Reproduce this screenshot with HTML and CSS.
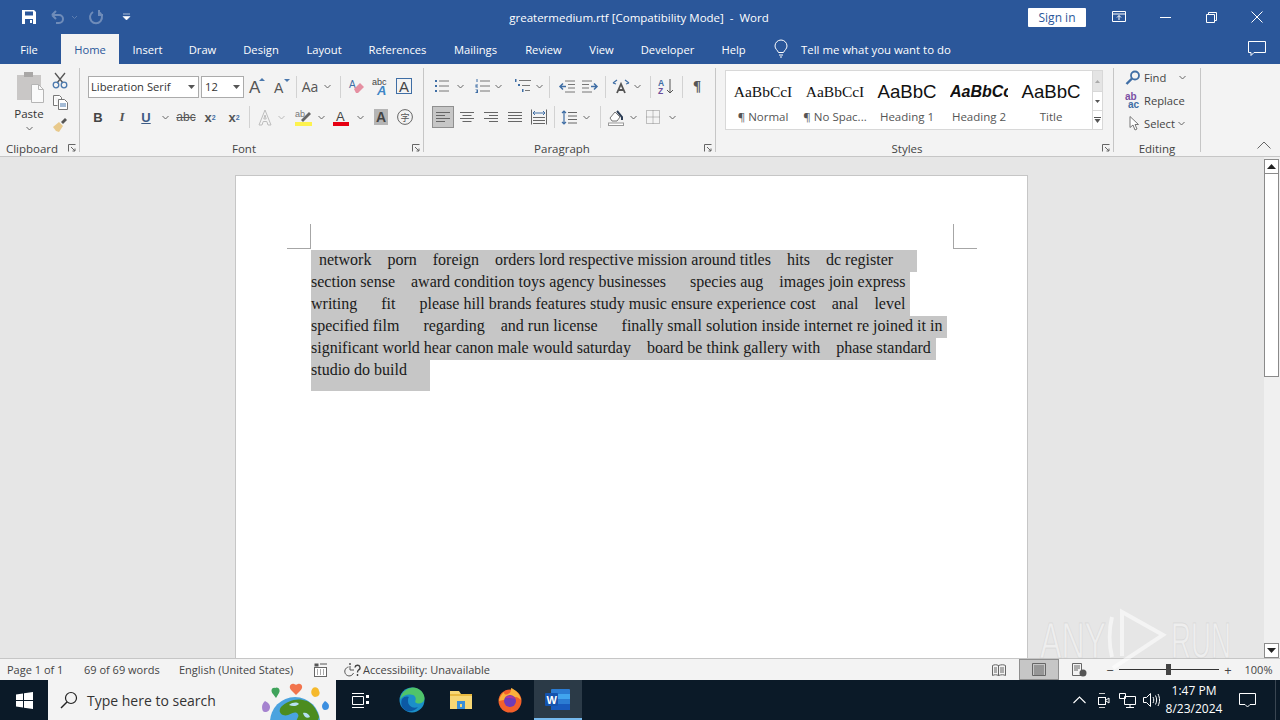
FILE: index.html
```html
<!DOCTYPE html>
<html lang="en">
<head>
<meta charset="utf-8">
<title>greatermedium.rtf - Word</title>
<link rel="stylesheet" href="styles.css">
</head>
<body>
<div class="app">
  <header class="titlebar">
    <div class="qat">
      <span class="q w32"><svg width="16" height="16" viewBox="0 0 16 16"><path d="M1 1h12l2 2v12H1z" fill="#fff"/><rect x="4" y="2.500" width="8" height="4" fill="#2b579a"/><rect x="4" y="10" width="8" height="5" fill="#2b579a"/><rect x="9" y="11" width="2" height="3" fill="#fff"/></svg></span>
      <span class="q qw24"><svg width="16" height="14" viewBox="0 0 16 14"><path d="M3 5h7a4 4 0 0 1 0 8H7M3 5l4-4M3 5l4 4" fill="none" stroke="#6f8cb9" stroke-width="2"/></svg></span>
      <span class="q qw10"><svg width="7" height="5" viewBox="0 0 7 5"><path d="M1 1l2.500 2.500L6 1" fill="none" stroke="#5d7eb0"/></svg></span>
      <span class="q qw34"><svg width="16" height="16" viewBox="0 0 16 16"><path d="M5 3a6 6 0 1 0 6 0M11 1v5h4" fill="none" stroke="#6f8cb9" stroke-width="2"/></svg></span>
      <span class="q qw26"><svg width="9" height="8" viewBox="0 0 9 8"><path d="M1 1h7M1 3.500h7L4.500 7z" fill="#fff" stroke="#fff" stroke-width=".6"/></svg></span>
    </div>
    <div class="doctitle">greatermedium.rtf [Compatibility Mode]&nbsp; -&nbsp; Word</div>
    <div class="winbtns">
      <span class="signin">Sign in</span>
      <span class="wb"><svg width="14" height="13" viewBox="0 0 14 13"><path d="M.5.500h13v10H.5zM.5 3h13M7 9V4.500M5 6.500l2-2 2 2" fill="none" stroke="#fff"/></svg></span>
      <span class="wb"><svg width="11" height="1" viewBox="0 0 11 1"><path d="M0 .5h11" stroke="#fff"/></svg></span>
      <span class="wb"><svg width="11" height="11" viewBox="0 0 11 11"><path d="M.5 2.500h8v8h-8zM2.500 2.500v-2h8v8h-2" fill="none" stroke="#fff"/></svg></span>
      <span class="wb"><svg width="12" height="12" viewBox="0 0 12 12"><path d="M.5.500l11 11M11.500.500l-11 11" stroke="#fff"/></svg></span>
    </div>
  </header>

  <nav class="tabs">
    <span class="tab tab-file">File</span>
    <span class="tab active">Home</span>
    <span class="tab">Insert</span>
    <span class="tab">Draw</span>
    <span class="tab">Design</span>
    <span class="tab">Layout</span>
    <span class="tab">References</span>
    <span class="tab">Mailings</span>
    <span class="tab">Review</span>
    <span class="tab">View</span>
    <span class="tab">Developer</span>
    <span class="tab">Help</span>
    <span class="tell"><svg width="14" height="18" viewBox="0 0 14 18"><path d="M4.500 12.500C3.500 10 1 9 1 6a6 6 0 0 1 12 0c0 3-2.500 4-3.500 6.500zM5 15h4M6 17h2" fill="none" stroke="#fff"/></svg><span>Tell me what you want to do</span></span>
    <span class="comment"><svg width="18" height="16" viewBox="0 0 18 16"><path d="M.5.500h17v11H6l-3 3v-3H.5z" fill="none" stroke="#fff"/></svg></span>
  </nav>

  <section class="ribbon">
    <div class="group g-clip">
      <div class="clipbody">
        <div class="paste">
          <svg class="pasteicon" width="30" height="32" viewBox="0 0 30 32"><rect x="2" y="3" width="24" height="25" fill="#c9c7c6"/><rect x="9" y="0" width="9" height="5" fill="#a9a7a6"/><path d="M16.500 12.500h7l5 5v13h-12z" fill="#fafafa" stroke="#b5b5b5"/><path d="M23.500 12.500v5h5" fill="none" stroke="#b5b5b5"/></svg>
          <span class="paste-l">Paste</span>
          <svg class="chev" width="7" height="5" viewBox="0 0 7 5"><path d="M.5 1l3 3 3-3" fill="none" stroke="#666"/></svg>
        </div>
        <div class="clipside">
          <span class="cs"><svg width="16" height="17" viewBox="0 0 16 17"><path d="M3 1l8 10M13 1L5 11" stroke="#555" stroke-width="1.300"/><circle cx="4" cy="13" r="2.800" fill="none" stroke="#4a78ad" stroke-width="1.300"/><circle cx="12" cy="13" r="2.800" fill="none" stroke="#4a78ad" stroke-width="1.300"/></svg></span>
          <span class="cs"><svg width="16" height="15" viewBox="0 0 16 15"><path d="M1.500.500h6l2 2v2M1.500.500v10h4" fill="#fff" stroke="#777"/><path d="M6.500 4.500h6l3 3v7h-9z" fill="#fff" stroke="#777"/><path d="M8 9h6M8 11h6" stroke="#4a78ad"/></svg></span>
          <span class="cs"><svg width="16" height="16" viewBox="0 0 16 16"><path d="M1 10l6-5 4 4-4 6-3-1z" fill="#e8c98b"/><path d="M9 5l4-4 2 2-4 4z" fill="#555"/></svg></span>
        </div>
      </div>
      <div class="glabel"><span class="gname">Clipboard</span><span class="launch"><svg width="8" height="8" viewBox="0 0 8 8"><path d="M.5 7.500v-7h7M3 3l4 4M7 4.500V7H4.500" fill="none" stroke="#666"/></svg></span></div>
    </div>

    <div class="group g-font">
      <div class="rows">
        <div class="row r-f1">
          <span class="combo c-font"><span class="ctext">Liberation Serif</span><svg width="7" height="4" viewBox="0 0 7 4"><path d="M0 0h7L3.500 4z" fill="#555"/></svg></span>
          <span class="combo c-size"><span class="ctext">12</span><svg width="7" height="4" viewBox="0 0 7 4"><path d="M0 0h7L3.500 4z" fill="#555"/></svg></span>
          <span class="b w24"><svg width="20" height="18" viewBox="0 0 20 18"><text x="1" y="16" class="ic-a a-l">A</text><path d="M11 4l3-3 3 3z" fill="#4a78ad"/></svg></span>
          <span class="b w24"><svg width="20" height="18" viewBox="0 0 20 18"><text x="2" y="16" class="ic-a a-m">A</text><path d="M12 2h6l-3 3z" fill="#4a78ad"/></svg></span>
          <span class="sep w4"></span>
          <span class="b w22 aa">Aa</span>
          <span class="b w14"><svg width="7" height="5" viewBox="0 0 7 5"><path d="M.5 1l3 3 3-3" fill="none" stroke="#666"/></svg></span>
          <span class="sep w12"></span>
          <span class="b w22"><svg width="16" height="16" viewBox="0 0 16 16"><text x="0" y="10" class="ic-a a-xs">A</text><path d="M5 11l6-6 4 4-6 6H7z" fill="#e58fa1"/></svg></span>
          <span class="b w24"><svg width="18" height="18" viewBox="0 0 18 18"><text x="1" y="8" class="ic-abc">abc</text><text x="6" y="18" class="ic-a a-blue">A</text></svg></span>
          <span class="b w24"><span class="boxa">A</span></span>
        </div>
        <div class="row r-f2">
          <span class="b w24 fb">B</span>
          <span class="b w24 fi">I</span>
          <span class="b w24 fu">U</span>
          <span class="b w14"><svg width="7" height="5" viewBox="0 0 7 5"><path d="M.5 1l3 3 3-3" fill="none" stroke="#666"/></svg></span>
          <span class="sp2"></span>
          <span class="b w24 fs">abc</span>
          <span class="b w24 fx">x<sub>2</sub></span>
          <span class="b w24 fx">x<sup>2</sup></span>
          <span class="sep w7"></span>
          <span class="b w24"><svg width="16" height="17" viewBox="0 0 16 17"><path d="M8 1l6 15h-3l-1.200-3.500H6.200L5 16H2z M8 6L6.800 10h2.400z" fill="#f4f4f4" stroke="#bdbdbd"/></svg></span>
          <span class="b w8"><svg width="7" height="5" viewBox="0 0 7 5"><path d="M.5 1l3 3 3-3" fill="none" stroke="#bbb"/></svg></span>
          <span class="b w6"></span>
          <span class="b w24"><svg width="19" height="17" viewBox="0 0 19 17"><text x="1" y="8" class="ic-abc g">ab</text><path d="M7 11l8-8 2 2-8 8z" fill="#666"/><rect x="1" y="13" width="17" height="4" fill="#fdf24e"/></svg></span>
          <span class="b w12"><svg width="7" height="5" viewBox="0 0 7 5"><path d="M.5 1l3 3 3-3" fill="none" stroke="#666"/></svg></span>
          <span class="b w28"><svg width="17" height="17" viewBox="0 0 17 17"><text x="3" y="12" class="ic-a a-dk">A</text><rect x="0" y="13" width="16" height="4" fill="#e60012"/></svg></span>
          <span class="b w10"><svg width="7" height="5" viewBox="0 0 7 5"><path d="M.5 1l3 3 3-3" fill="none" stroke="#666"/></svg></span>
          <span class="b w32"><span class="shada">A</span></span>
          <span class="b w16"><svg width="16" height="16" viewBox="0 0 16 16"><circle cx="8" cy="8" r="7.400" fill="none" stroke="#666"/><text x="3.500" y="12" class="ic-han">字</text></svg></span>
        </div>
      </div>
      <div class="glabel"><span class="gname">Font</span><span class="launch"><svg width="8" height="8" viewBox="0 0 8 8"><path d="M.5 7.500v-7h7M3 3l4 4M7 4.500V7H4.500" fill="none" stroke="#666"/></svg></span></div>
    </div>

    <div class="group g-para">
      <div class="rows">
        <div class="row r-p1">
          <span class="b w24"><svg width="16" height="14" viewBox="0 0 16 14"><path d="M5 2h10M5 7h10M5 12h10" stroke="#777"/><path d="M1 1h2v2H1zM1 6h2v2H1zM1 11h2v2H1z" fill="#3f6ea5"/></svg></span>
          <span class="b w12"><svg width="7" height="5" viewBox="0 0 7 5"><path d="M.5 1l3 3 3-3" fill="none" stroke="#666"/></svg></span>
          <span class="sp6"></span>
          <span class="b w20"><svg width="15" height="14" viewBox="0 0 15 14"><path d="M5 2h10M5 7h10M5 12h10" stroke="#777"/><path d="M1.500 0h1v3h-1zM.5 5.500h2.500v1H1.500v1H3v1H.5zM.5 10.500H3V14H.5v-1H2v-.5H1v-1h1V11H.5z" fill="#3f6ea5"/></svg></span>
          <span class="b w12"><svg width="7" height="5" viewBox="0 0 7 5"><path d="M.5 1l3 3 3-3" fill="none" stroke="#666"/></svg></span>
          <span class="sp6"></span>
          <span class="b w24"><svg width="17" height="14" viewBox="0 0 17 14"><path d="M5 1.500h12M8 6.500h8M11 11.500h5" stroke="#777"/><path d="M1 0h1.500v3H1zM4 5h2v2H4zM8 10h1.500v3H8z" fill="#3f6ea5"/></svg></span>
          <span class="b w10"><svg width="7" height="5" viewBox="0 0 7 5"><path d="M.5 1l3 3 3-3" fill="none" stroke="#666"/></svg></span>
          <span class="sep w10"></span>
          <span class="b w24"><svg width="17" height="13" viewBox="0 0 17 13"><path d="M7 1h10M10 4.500h7M10 8h7M7 12h10" stroke="#777"/><path d="M8 6.500H2M5 3.500l-3 3 3 3" fill="none" stroke="#3f6ea5" stroke-width="1.500"/></svg></span>
          <span class="b w24"><svg width="17" height="13" viewBox="0 0 17 13"><path d="M0 1h10M0 4.500h7M0 8h7M0 12h10" stroke="#777"/><path d="M9 6.500h6M12 3.500l3 3-3 3" fill="none" stroke="#3f6ea5" stroke-width="1.500"/></svg></span>
          <span class="sep w7"></span>
          <span class="b w24"><svg width="18" height="15" viewBox="0 0 18 15"><path d="M5 14l4-9 4 9M6.500 11h5" fill="none" stroke="#555" stroke-width="1.800"/><path d="M1 4l4-3M1 4l3 1M17 4l-4-3M17 4l-3 1" fill="none" stroke="#3f6ea5" stroke-width="1.200"/></svg></span>
          <span class="b w8"><svg width="7" height="5" viewBox="0 0 7 5"><path d="M.5 1l3 3 3-3" fill="none" stroke="#666"/></svg></span>
          <span class="sep w18"></span>
          <span class="b w14"><svg width="16" height="17" viewBox="0 0 16 17"><text x="0" y="8" class="ic-az">A</text><text x="0" y="16" class="ic-az z">Z</text><path d="M12 1v14M9 12l3 3 3-3" fill="none" stroke="#555"/></svg></span>
          <span class="sep w18"></span>
          <span class="b w12 pil">¶</span>
        </div>
        <div class="row r-p2">
          <span class="b w22 on"><svg width="14" height="11" viewBox="0 0 14 11"><path d="M0 .5h14M0 3.500h9M0 6.500h14M0 9.500h9" stroke="#666"/></svg></span>
          <span class="sp1"></span>
          <span class="b w24"><svg width="14" height="11" viewBox="0 0 14 11"><path d="M0 .5h14M2.500 3.500h9M0 6.500h14M2.500 9.500h9" stroke="#666"/></svg></span>
          <span class="b w24"><svg width="14" height="11" viewBox="0 0 14 11"><path d="M0 .5h14M5 3.500h9M0 6.500h14M5 9.500h9" stroke="#666"/></svg></span>
          <span class="b w24"><svg width="14" height="11" viewBox="0 0 14 11"><path d="M0 .5h14M0 3.500h14M0 6.500h14M0 9.500h14" stroke="#666"/></svg></span>
          <span class="b w24"><svg width="16" height="16" viewBox="0 0 16 16"><path d="M.5.500v15M15.500.500v15M2 14.500h12M2 11.500h12M2 8.500h12" stroke="#666"/><path d="M2 4h12M4 2L2 4l2 2M12 2l2 2-2 2" fill="none" stroke="#3f6ea5"/></svg></span>
          <span class="sep w6"></span>
          <span class="b w24"><svg width="16" height="15" viewBox="0 0 16 15"><path d="M7 2.500h9M7 6h9M7 9.500h9M7 13h9" stroke="#666"/><path d="M3 1v13M1 3l2-2 2 2M1 12l2 2 2-2" fill="none" stroke="#3f6ea5" stroke-width="1.200"/></svg></span>
          <span class="b w10"><svg width="7" height="5" viewBox="0 0 7 5"><path d="M.5 1l3 3 3-3" fill="none" stroke="#666"/></svg></span>
          <span class="sep w18"></span>
          <span class="b w14"><svg width="17" height="17" viewBox="0 0 17 17"><path d="M2 9l5-6 5 5-3 4H4z" fill="#fff" stroke="#777"/><path d="M9 2l5 6v3" fill="none" stroke="#2d3e55" stroke-width="2"/><rect x=".5" y="14" width="15" height="2.500" fill="#fff" stroke="#999"/></svg></span>
          <span class="sp4"></span>
          <span class="b w12"><svg width="7" height="5" viewBox="0 0 7 5"><path d="M.5 1l3 3 3-3" fill="none" stroke="#666"/></svg></span>
          <span class="b w28"><svg width="14" height="14" viewBox="0 0 14 14"><path d="M.5.500h13v13H.5zM7 .5v13M.5 7h13" fill="none" stroke="#888" stroke-dasharray="1 1"/></svg></span>
          <span class="b w10"><svg width="7" height="5" viewBox="0 0 7 5"><path d="M.5 1l3 3 3-3" fill="none" stroke="#666"/></svg></span>
        </div>
      </div>
      <div class="glabel"><span class="gname">Paragraph</span><span class="launch"><svg width="8" height="8" viewBox="0 0 8 8"><path d="M.5 7.500v-7h7M3 3l4 4M7 4.500V7H4.500" fill="none" stroke="#666"/></svg></span></div>
    </div>

    <div class="group g-styles">
      <div class="gallery">
        <div class="style"><span class="sample s-normal">AaBbCcI</span><span class="cap">¶ Normal</span></div>
        <div class="style"><span class="sample s-normal">AaBbCcI</span><span class="cap">¶ No Spac...</span></div>
        <div class="style"><span class="sample s-h1">AaBbC</span><span class="cap">Heading 1</span></div>
        <div class="style"><span class="sample s-h2">AaBbCc</span><span class="cap">Heading 2</span></div>
        <div class="style"><span class="sample s-h1">AaBbC</span><span class="cap">Title</span></div>
        <div class="gscroll">
          <span class="gs gs-up"><svg width="5" height="3" viewBox="0 0 5 3"><path d="M0 3h5L2.500 0z" fill="#aaa"/></svg></span>
          <span class="gs"><svg width="5" height="3" viewBox="0 0 5 3"><path d="M0 0h5L2.500 3z" fill="#555"/></svg></span>
          <span class="gs"><svg width="7" height="6" viewBox="0 0 7 6"><path d="M0 .5h7" stroke="#555"/><path d="M.5 2h6L3.500 6z" fill="#555"/></svg></span>
        </div>
      </div>
      <div class="glabel"><span class="gname">Styles</span><span class="launch"><svg width="8" height="8" viewBox="0 0 8 8"><path d="M.5 7.500v-7h7M3 3l4 4M7 4.500V7H4.500" fill="none" stroke="#666"/></svg></span></div>
    </div>

    <div class="group g-edit">
      <div class="editrows">
        <div class="er"><svg width="15" height="15" viewBox="0 0 15 15"><circle cx="9.500" cy="5.500" r="4" fill="none" stroke="#3f6ea5" stroke-width="1.800"/><path d="M6.500 8.500L1 14" stroke="#3f6ea5" stroke-width="2.400"/></svg><span class="et">Find</span><svg class="ec1" width="7" height="5" viewBox="0 0 7 5"><path d="M.5 1l3 3 3-3" fill="none" stroke="#666"/></svg></div>
        <div class="er"><svg width="16" height="15" viewBox="0 0 16 15"><text x="0" y="7" class="ic-rep p">ab</text><text x="3" y="15" class="ic-rep bl">ac</text></svg><span class="et">Replace</span></div>
        <div class="er"><svg width="13" height="16" viewBox="0 0 13 16"><path d="M3.500.500v11l3-2.500 2 5 2-1-2-4.500h3.500z" fill="#fff" stroke="#777"/></svg><span class="et">Select</span><svg class="ec2" width="7" height="5" viewBox="0 0 7 5"><path d="M.5 1l3 3 3-3" fill="none" stroke="#666"/></svg></div>
      </div>
      <div class="glabel"><span class="gname">Editing</span></div>
    </div>

    <div class="collapse"><svg width="14" height="8" viewBox="0 0 14 8"><path d="M.5 7.500L7 1l6.500 6.500" fill="none" stroke="#666"/></svg></div>
  </section>

  <main class="workspace">
    <div class="canvas">
      <article class="page">
        <span class="crop crop-l"></span>
        <span class="crop crop-r"></span>
        <p class="ln l1">  network    porn    foreign    orders lord respective mission around titles    hits    dc register</p>
        <p class="ln l2">section sense    award condition toys agency businesses      species aug    images join express</p>
        <p class="ln l3">writing      fit      please hill brands features study music ensure experience cost    anal    level</p>
        <p class="ln l4">specified film      regarding    and run license      finally small solution inside internet re joined it in</p>
        <p class="ln l5">significant world hear canon male would saturday    board be think gallery with    phase standard</p>
        <p class="ln l6">studio do build</p>
      </article>
    </div>
    <aside class="vscroll">
      <span class="sb-btn"><svg width="9" height="5" viewBox="0 0 9 5"><path d="M0 5h9L4.500 0z" fill="#222"/></svg></span>
      <span class="sb-thumb"></span>
      <span class="sb-fill"></span>
      <span class="sb-btn"><svg width="9" height="5" viewBox="0 0 9 5"><path d="M0 0h9L4.500 5z" fill="#222"/></svg></span>
    </aside>
  </main>

  <footer class="status">
    <span class="st st-page">Page 1 of 1</span>
    <span class="st st-words">69 of 69 words</span>
    <span class="st st-lang">English (United States)</span>
    <span class="st st-ico"><svg width="13" height="14" viewBox="0 0 13 14"><path d="M.5.500h4v3h-4z" fill="#555"/><path d="M6 1h7" stroke="#555"/><rect x=".5" y="4.500" width="12" height="9" fill="#fff" stroke="#666"/><path d="M3 7h1M6 7h1M9 7h1M3 9h1M6 9h1M9 9h1M3 11h1M6 11h1M9 11h1" stroke="#555"/></svg></span>
    <span class="st st-acc"><svg width="17" height="15" viewBox="0 0 17 15"><circle cx="5" cy="2" r="1" fill="#555"/><path d="M3.500 5a4.500 4.500 0 1 0 5 6M5 4v4h4" fill="none" stroke="#555"/><path d="M10 5.500a2.500 2.500 0 1 1 3.500 2.500c-.800.500-1 1-1 2.500M12.500 12v2" fill="none" stroke="#444" stroke-width="1.400"/></svg><span>Accessibility: Unavailable</span></span>
    <div class="st-right">
      <span class="vw"><svg width="14" height="12" viewBox="0 0 14 12"><path d="M.5 1.500c2-1 4-1 6 0v10c-2-1-4-1-6 0zM13.500 1.500c-2-1-4-1-7 0v10c3-1 5-1 7 0zM2 4h3M2 6h3M2 8h3M8 4h4M8 6h4M8 8h4" fill="none" stroke="#666"/></svg></span>
      <span class="vw on"><svg width="14" height="13" viewBox="0 0 14 13"><path d="M.5.500h13v12H.5zM2 3h10M2 5h10M2 7h10M2 9h10M2 11h10" fill="none" stroke="#666"/></svg></span>
      <span class="vw"><svg width="15" height="14" viewBox="0 0 15 14"><path d="M.5.500h9v12H.5zM2 3h6M2 5h6M2 7h4" fill="none" stroke="#666"/><circle cx="11" cy="10" r="3.500" fill="#555"/></svg></span>
      <span class="zm">−</span>
      <span class="slider"><span class="knob"></span></span>
      <span class="zp">+</span>
      <span class="zv">100%</span>
    </div>
  </footer>

  <footer class="taskbar">
    <span class="start"><svg width="17" height="17" viewBox="0 0 17 17"><path d="M0 2.400L7 1.400V8H0zM8 1.300L17 0v8H8zM0 9h7v6.600l-7-1zM8 9h9v8l-9-1.300z" fill="#fff"/></svg></span>
    <div class="search">
      <svg width="18" height="18" viewBox="0 0 18 18"><circle cx="11" cy="7" r="5.500" fill="none" stroke="#222" stroke-width="1.200"/><path d="M7 11l-6 6" stroke="#222" stroke-width="1.400"/></svg>
      <span class="stext">Type here to search</span>
      <svg class="globe" width="74" height="40" viewBox="0 0 74 40">
        <circle cx="37" cy="42" r="25" fill="#4aa3df"/>
        <path d="M23 27c6-6 16-10 26-6 6 3 10 9 12 16l-2 6H39c-2-5 4-6 0-10-5-2-8 4-14 2-4-2-4-5-2-8z" fill="#4c8c1f"/>
        <path d="M31 25c4-3 8-3 10-1-2 2-6 3-10 1zM45 33c3-1 6 1 7 4-3 2-6 0-7-4z" fill="#b7e0f2"/>
        <path d="M34 11c-4-3-2-8 2-7 1 0 2 1 2 1s1-1 2-1c4-1 6 4 2 7l-4 4z" fill="#f2744d"/>
        <path d="M15 14c-3-3-1-7 2-6 3-2 6 2 4 5l-3 5z" fill="#3fa35b"/>
        <path d="M55 8c2-2 6 0 6 3 2 3-1 6-4 6-4-1-5-6-2-9z" fill="#f5b92c"/>
        <path d="M4 27c0-3 2-5 3-6 2 1 5 3 5 6 0 3-2 5-5 5-2 0-3-2-3-5z" fill="#a583cf"/>
        <path d="M64 26c0-2 2-4 3-5 2 1 4 3 4 5 0 3-2 4-4 4s-3-2-3-4z" fill="#3c8fe0"/>
      </svg>
    </div>
    <span class="tb tb-task"><svg width="17" height="17" viewBox="0 0 17 17"><path d="M.5 4.500h11v8H.5zM0 1.500h12M0 15.500h12" fill="none" stroke="#fff"/><path d="M14 3h3v3h-3zM14 9h3v3h-3z" fill="#fff"/></svg></span>
    <span class="tb"><svg width="26" height="26" viewBox="0 0 26 26"><circle cx="13" cy="13" r="12.500" fill="#1b8fc9"/><path d="M1 13C2 4 10 .5 14 .5c7 0 11.500 6 11.500 10.500 0 4-3 5.500-6 5.500-2 0-4-1-3-3 1-3-1-6-5-6-5 0-9 2-10.500 5.500z" fill="#4fc46a"/><path d="M9 14c0 5 5 8 10 6-3 4-8 5-11 4C3 22 1 17 3 12c2-3 6-3 7-2-1 1-1 2-1 4z" fill="#0c59a4"/></svg></span>
    <span class="tb"><svg width="24" height="20" viewBox="0 0 24 20"><path d="M1 1h9l2 3h11v15H1z" fill="#f7d774"/><rect x="1" y="4" width="22" height="2" fill="#e8b93f"/><rect x="8" y="11" width="8" height="8" fill="#3a8fd8"/><rect x="11" y="14" width="2" height="3" fill="#f7d774"/></svg></span>
    <span class="tb"><svg width="26" height="26" viewBox="0 0 26 26"><circle cx="13" cy="14" r="11.500" fill="#f3602a"/><path d="M2 14c1-5 3-7 5-9 0 3 2 3 4 2 3-1 3-4 3-6 5 2 9 6 10 12-2-2-4-3-5-3z" fill="#fbb03b"/><circle cx="13" cy="14" r="6" fill="#6f3bb8"/><path d="M8 11c3-3 8-3 10 1-3-1-6-1-10-1z" fill="#b0359b"/></svg></span>
    <span class="tb tb-word"><svg width="26" height="21" viewBox="0 0 26 21"><rect x="6" y="0" width="19" height="21" rx="1" fill="#2b7cd3"/><rect x="6" y="5" width="19" height="5" fill="#41a5ee"/><rect x="6" y="15" width="19" height="6" fill="#185abd"/><rect x="0" y="4" width="13" height="13" rx="1" fill="#1453ae"/><text x="1.500" y="14.500" class="ic-w">W</text></svg></span>
    <div class="tray">
      <span class="tr"><svg width="13" height="8" viewBox="0 0 13 8"><path d="M.5 7l6-6 6 6" fill="none" stroke="#fff" stroke-width="1.100"/></svg></span>
      <span class="tr"><svg width="13" height="19" viewBox="0 0 13 19"><path d="M2 2.500h6M2 16.500h6" stroke="#ccc"/><rect x="1.500" y="6.500" width="7" height="7" fill="none" stroke="#fff"/><path d="M9 9l3-2v5l-3-2" fill="none" stroke="#fff"/></svg></span>
      <span class="tr"><svg width="17" height="15" viewBox="0 0 17 15"><path d="M5.500 3.500h11v8h-11zM.5.500h6v5h-6zM11 11.500v3M7 14.500h8" fill="#0b1a28" stroke="#fff"/></svg></span>
      <span class="tr"><svg width="17" height="14" viewBox="0 0 17 14"><path d="M.5 4.500h3l4-4v13l-4-4h-3z" fill="none" stroke="#fff"/><path d="M10 4c1 2 1 4 0 6M12.500 2.500c1.500 3 1.500 6 0 9M15 1c2 4 2 8 0 12" fill="none" stroke="#fff"/></svg></span>
      <span class="clock"><span>1:47 PM</span><span>8/23/2024</span></span>
      <span class="note"><svg width="17" height="15" viewBox="0 0 17 15"><path d="M.5.500h16v11H11l-2.500 2.500L6 11.500H.5z" fill="none" stroke="#fff"/></svg></span>
      <span class="edge"></span>
    </div>
  </footer>

  <svg class="wm" width="210" height="84" viewBox="0 0 210 84" aria-label="ANY RUN watermark">
    <text x="4" y="52" textLength="66" lengthAdjust="spacingAndGlyphs" class="wmt">ANY</text>
    <text x="135" y="52" textLength="60" lengthAdjust="spacingAndGlyphs" class="wmt">RUN</text>
    <path d="M77 62L127 29L86 6V50M76 11c-3 12-3 28 0 40" class="wmp"/>
  </svg>
</div>
</body>
</html>
```

FILE: styles.css
```css
* { box-sizing: border-box; }
html, body { margin: 0; padding: 0; }
body { width: 1280px; height: 720px; overflow: hidden; font-family: "Open Sans", "Liberation Sans", sans-serif; font-size: 11.5px; color: #444; }
svg { display: block; flex: none; overflow: visible; }
.app { position: relative; display: flex; flex-direction: column; width: 1280px; height: 720px; background: #e6e6e6; overflow: hidden; }

/* title bar */
.titlebar { display: flex; align-items: center; height: 34px; background: #2b579a; color: #fff; flex: none; }
.qat { display: flex; align-items: center; width: 504px; padding-left: 13px; }
.q { display: flex; justify-content: center; align-items: center; height: 34px; }
.w32 { width: 32px; } .qw24 { width: 24px; } .qw10 { width: 10px; } .qw34 { width: 34px; } .qw26 { width: 26px; }
.doctitle { width: 270px; font-size: 11.5px; text-align: center; color: #fff; }
.winbtns { display: flex; align-items: center; margin-left: auto; height: 34px; }
.signin { display: flex; align-items: center; justify-content: center; width: 58px; height: 19px; margin-right: 10px; background: #fff; color: #2b579a; font-size: 12px; border-radius: 1px; }
.wb { display: flex; align-items: center; justify-content: center; width: 46px; height: 30px; }

/* tabs */
.tabs { display: grid; grid-template-columns: 61px 58px 57px 53px 64px 62px 85px 71px 65px 51px 81px 51px auto 1fr; height: 30px; background: #2b579a; flex: none; }
.tab { display: flex; align-items: center; justify-content: center; color: #fff; font-size: 11.2px; }
.tab-file { padding-right: 3px; }
.tab.active { background: #f3f3f3; color: #2b579a; }
.tell { display: flex; align-items: center; gap: 13px; margin-left: 15px; color: #fff; font-size: 11.4px; }
.comment { display: flex; justify-content: flex-end; align-items: center; padding-right: 14px; }

/* ribbon */
.ribbon { display: flex; height: 93px; background: #f3f3f3; border-bottom: 1px solid #c6c6c6; flex: none; padding-top: 4px; }
.group { display: flex; flex-direction: column; height: 84px; border-right: 1px solid #c6c6c6; flex: none; }
.g-clip { width: 80px; } .g-font { width: 344px; } .g-para { width: 292px; } .g-styles { width: 398px; } .g-edit { width: 87px; }
.rows { display: flex; flex-direction: column; gap: 8px; padding-top: 8px; height: 68px; flex: none; }
.row { display: flex; align-items: center; height: 22px; }
.r-f1 { padding-left: 8px; }
.r-f2 { padding-left: 6px; }
.r-p1 { padding-left: 6px; }
.r-p2 { padding-left: 8px; }
.r-f1 .b, .r-p1 .b { margin-top: -2px; }
.glabel { display: flex; align-items: center; height: 16px; margin-top: 4px; flex: none; }
.gname { flex: 1; text-align: center; font-size: 11.5px; color: #444; }
.launch { display: flex; align-items: center; justify-content: center; width: 15px; height: 16px; }
.b { display: flex; align-items: center; justify-content: center; height: 22px; flex: none; color: #555; }
.w4 { width: 4px; } .w6 { width: 6px; } .w7 { width: 7px; } .w8 { width: 8px; } .w10 { width: 10px; } .w14 { width: 14px; } .w16 { width: 16px; } .w18 { width: 18px; } .w20 { width: 20px; } .w22 { width: 22px; } .w24 { width: 24px; } .w12 { width: 12px; } .w28 { width: 28px; }
.sep { display: flex; justify-content: center; height: 22px; flex: none; }
.sep::before { content: ""; width: 1px; height: 100%; background: #d2d2d2; }
.sp1 { width: 1px; flex: none; } .sp2 { width: 2px; flex: none; } .sp4 { width: 4px; flex: none; } .sp6 { width: 6px; flex: none; }
.combo { display: flex; align-items: center; justify-content: space-between; height: 22px; background: #fff; border: 1px solid #ababab; padding: 0 3px 1px 2px; flex: none; font-size: 11.2px; color: #333; }
.c-font { width: 111px; margin-right: 2px; }
.c-size { width: 43px; margin-right: 2px; }
.c-size .ctext { padding-left: 1px; }
.aa { font-size: 14px; color: #555; padding-left: 2px; }
.boxa { display: flex; align-items: center; justify-content: center; width: 16px; height: 16px; border: 1.500px solid #3f6ea5; font-family: "Liberation Sans", sans-serif; font-size: 15px; color: #444; }
.fb { font: bold 13px "Liberation Sans", sans-serif; color: #444; }
.fi { font: italic bold 13px "Liberation Serif", serif; color: #555; }
.fu { font: bold 13px "Liberation Sans", sans-serif; text-decoration: underline; color: #3d5b85; }
.fs { font: 12px "Liberation Sans", sans-serif; text-decoration: line-through; color: #555; }
.fx { font: bold 13px "Liberation Sans", sans-serif; color: #555; }
.fx sub, .fx sup { font-size: 7px; color: #3f6ea5; }
.shada { display: flex; align-items: center; justify-content: center; width: 14px; height: 16px; background: #b5b5b5; font: bold 14px "Liberation Sans", sans-serif; color: #444; }
.pil { font: bold 15px "Liberation Serif", serif; color: #555; }
.on { background: #c6c6c6; border: 1px solid #8f8f8f; }
.ic-a { font-family: "Liberation Sans", sans-serif; fill: #555; }
.a-l { font-size: 17px; } .a-m { font-size: 14px; } .a-xs { font-size: 10px; fill: #3f6ea5; }
.a-blue { font-size: 13px; font-weight: bold; font-style: italic; fill: #3f86c6; }
.a-dk { font-size: 13px; fill: #444; }
.ic-abc { font: 9px "Liberation Sans", sans-serif; fill: #444; }
.ic-abc.g { fill: #777; }
.ic-han { font: 9px "Noto Sans CJK SC", sans-serif; fill: #555; }
.ic-az { font: bold 8.500px "Liberation Sans", sans-serif; fill: #3f6ea5; }
.ic-az.z { fill: #6b4f9b; }

/* clipboard */
.clipbody { display: flex; height: 68px; padding: 4px 0 0 13px; flex: none; }
.paste { display: flex; flex-direction: column; align-items: center; width: 32px; }
.pasteicon { margin-left: 2px; }
.paste-l { margin-top: 2px; font-size: 11.500px; color: #333; line-height: 16px; }
.chev { margin-top: 4px; }
.clipside { display: flex; flex-direction: column; align-items: center; width: 30px; margin-top: -3px; }
.cs { display: flex; align-items: center; justify-content: center; height: 23px; width: 30px; }

/* styles gallery */
.g-styles { padding-left: 9px; }
.gallery { display: grid; grid-template-columns: repeat(5, 72px) 1fr; width: 378px; height: 60px; margin-top: 2px; margin-bottom: 6px; padding-left: 1px; background: #fff; border: 1px solid #d8d8d8; flex: none; }
.style { display: flex; flex-direction: column; align-items: center; overflow: hidden; padding-top: 7px; }
.sample { height: 28px; line-height: 28px; white-space: nowrap; color: #111; width: 60px; overflow: hidden; text-align: center; display: flex; justify-content: center; }
.s-normal { font: 15.500px/28px "Liberation Serif", serif; }
.s-h1 { font: 18.670px/28px "Liberation Sans", sans-serif; }
.s-h2 { font: italic bold 16px/28px "Liberation Sans", sans-serif; justify-content: flex-start; width: 58px; }
.cap { font-size: 11.500px; color: #555; line-height: 16px; margin-top: 3px; white-space: nowrap; }
.gscroll { display: grid; grid-template-rows: 21px 19px 18px; border-left: 1px solid #d8d8d8; margin-left: 5px; }
.gs { display: flex; align-items: center; justify-content: center; border-bottom: 1px solid #d8d8d8; }
.gs-up { background: #e4e4e4; }
.gs:last-child { border-bottom: 0; }
.g-styles .glabel { margin-left: -9px; margin-top: 4px; }

/* editing */
.editrows { display: flex; flex-direction: column; height: 70px; margin-top: -2px; padding: 0 0 0 11px; flex: none; }
.er { display: flex; align-items: center; height: 23px; gap: 3px; font-size: 11.200px; color: #444; }
.er svg:first-child { width: 16px; }
.et { white-space: nowrap; }
.ec1 { margin-left: 10px; } .ec2 { margin-left: 0; }
.ic-rep { font: bold 10px "Liberation Sans", sans-serif; }
.ic-rep.p { fill: #7b4fa3; } .ic-rep.bl { fill: #3f6ea5; }
.collapse { display: flex; align-items: flex-end; justify-content: flex-end; flex: 1; height: 84px; padding: 0 9px 3px 0; }

/* workspace */
.workspace { display: flex; height: 501px; flex: none; overflow: hidden; }
.canvas { flex: 1; padding: 18px 0 0 235px; overflow: hidden; }
.page { position: relative; width: 793px; height: 500px; background: #fff; border: 1px solid #c6c6c6; padding: 74px 0 0 75px; }
.crop { position: absolute; top: 48px; width: 24px; height: 25px; border-bottom: 1px solid #a6a6a6; }
.crop-l { left: 51px; border-right: 1px solid #a6a6a6; }
.crop-r { left: 717px; border-left: 1px solid #a6a6a6; }
.ln { margin: 0; height: 22px; background: #c6c6c6; font: 16px/20px "Liberation Serif", serif; white-space: pre; color: #1a1a1a; }
.l1 { width: 606px; } .l2 { width: 599px; } .l3 { width: 599px; } .l4 { width: 636px; } .l5 { width: 625px; } .l6 { width: 119px; height: 31px; }
.vscroll { display: flex; flex-direction: column; width: 16px; padding-top: 2px; background: #f0f0f0; flex: none; }
.sb-btn { display: flex; align-items: center; justify-content: center; width: 15px; height: 15px; background: #fff; border: 1px solid #8a8a8a; flex: none; }
.sb-thumb { width: 15px; height: 203px; background: #fff; border: 1px solid #8a8a8a; border-top-width: 0; flex: none; }
.sb-fill { flex: 1; }

/* status bar */
.status { display: flex; align-items: center; height: 22px; background: #f3f3f3; border-top: 1px solid #c6c6c6; flex: none; font-size: 11px; color: #444; }
.st { white-space: nowrap; }
.st-page { width: 84px; padding-left: 7px; }
.st-words { width: 95px; }
.st-lang { width: 134px; }
.st-ico { width: 32px; padding-left: 1px; }
.st-acc { display: flex; align-items: center; gap: 1px; }
.st-right { display: flex; align-items: center; margin-left: auto; height: 21px; }
.vw { display: flex; align-items: center; justify-content: center; width: 40px; height: 21px; }
.vw.on { background: #c6c6c6; }
.zm, .zp { display: flex; justify-content: center; width: 12px; font-size: 13px; color: #444; }
.zm { margin-left: 5px; }
.slider { position: relative; width: 100px; height: 1px; margin: 0 3px; background: #333; }
.knob { position: absolute; left: 47px; top: -5px; width: 5px; height: 11px; background: #444; }
.zv { width: 46px; text-align: center; font-size: 11px; padding-left: 3px; }

/* task bar */
.taskbar { display: flex; align-items: center; height: 40px; background: #0b1a28; flex: none; color: #fff; }
.start { display: flex; align-items: center; justify-content: center; width: 48px; height: 40px; }
.search { display: flex; align-items: center; width: 288px; height: 40px; padding-left: 12px; background: #f3f3f3; color: #333; overflow: hidden; }
.stext { margin-left: 9px; font-size: 14px; white-space: nowrap; color: #333; }
.globe { margin-left: auto; margin-right: 4px; }
.tb { display: flex; align-items: center; justify-content: center; width: 49px; height: 40px; flex: none; }
.tb-task { width: 51px; padding-right: 2px; }
.tb-word { width: 48px; background: #2b3a47; border-bottom: 2px solid #76b9ed; }
.ic-w { font: bold 11px "Liberation Sans", sans-serif; fill: #fff; }
.tray { display: flex; align-items: center; margin-left: auto; height: 40px; }
.tr { display: flex; align-items: center; justify-content: center; width: 24px; height: 40px; }
.clock { display: flex; flex-direction: column; align-items: center; width: 62px; font-size: 12px; line-height: 18px; color: #fff; }
.note { display: flex; align-items: center; justify-content: center; width: 44px; height: 40px; }
.edge { width: 1px; height: 40px; background: #3a4652; margin-right: 4px; margin-left: 6px; }

/* watermark */
.wm { position: absolute; left: 1036px; top: 606px; pointer-events: none; }
.wmt { font: 50px "Liberation Sans", sans-serif; fill: rgba(255,255,255,.35); stroke: rgba(190,190,190,.35); stroke-width: 1; }
.wmp { fill: none; stroke: rgba(255,255,255,.55); stroke-width: 4; }
```
